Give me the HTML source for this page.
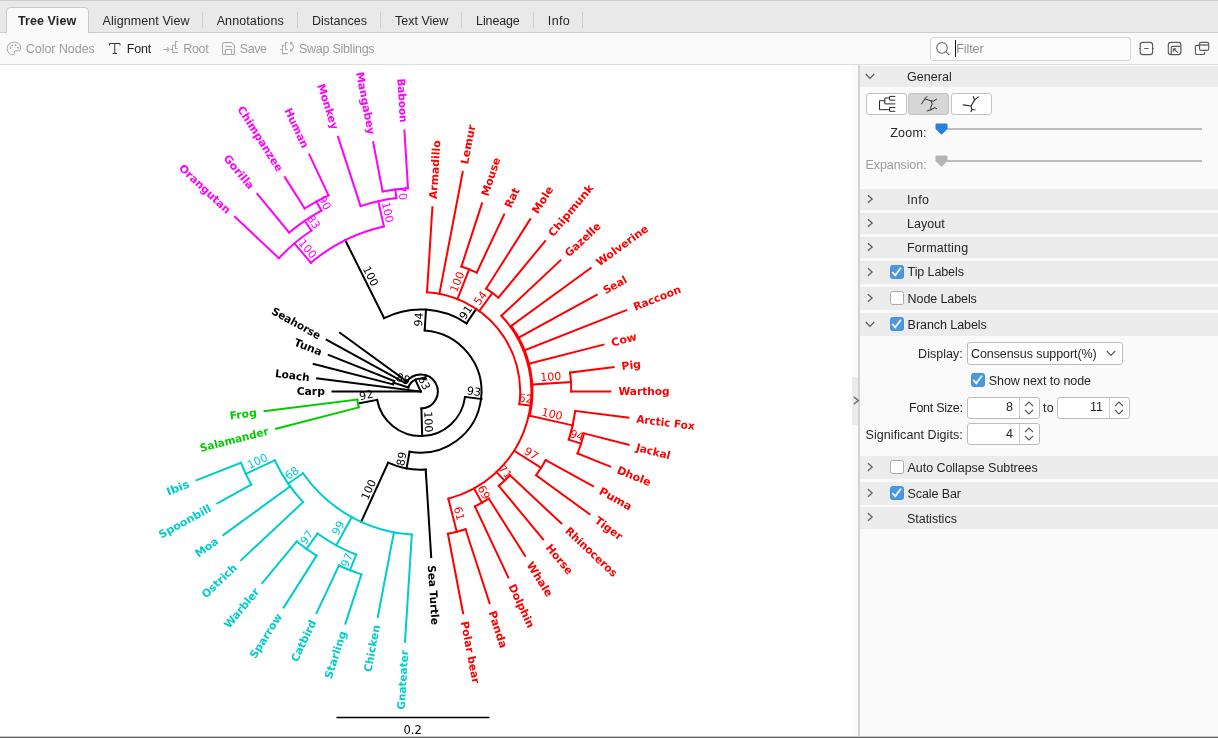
<!DOCTYPE html>
<html><head><meta charset="utf-8"><title>Tree View</title>
<style>
*{box-sizing:border-box;margin:0;padding:0}
html,body{width:1218px;height:738px;overflow:hidden;background:#fafafa}
body{position:relative;font-family:"Liberation Sans",sans-serif;font-size:12.5px;color:#232627}
.abs{position:absolute}
.t{position:absolute;white-space:nowrap;line-height:15px;height:15px}
.g{color:#9a9b9c}
#tabbar{left:0;top:0;width:1218px;height:33px;background:#e9e9e9;border-top:1px solid #cfcfcf;border-bottom:1px solid #cdcdcd}
#atab{left:6px;top:7px;width:83px;height:27px;background:#fafafa;border:1px solid #c9c9c9;border-bottom:none;border-radius:5px 5px 0 0}
.sep{position:absolute;top:12px;width:1px;height:16px;background:#cfcfcf}
#toolbar{left:0;top:33px;width:1218px;height:32px;background:#fafafa;border-bottom:1px solid #dedede}
#canvas{left:0;top:65px;width:852px;height:671px;background:#fff}
#split{left:852px;top:65px;width:6px;height:671px;background:#fafafa}
#splith{left:852px;top:377px;width:6px;height:48px;background:#ebebeb}
#vline{left:858px;top:65px;width:2px;height:671px;background:#d3d3d3}
#panel{left:860px;top:65px;width:358px;height:671px;background:#fafafa}
.row{position:absolute;left:860px;width:358px;background:#ececec}
.cb{position:absolute;width:13.6px;height:13.6px;border-radius:2.5px}
.cb.on{background:#4a98e2;border:1px solid #4590dc}
.cb.off{background:#fff;border:1px solid #a9a9a9}
.box{position:absolute;background:#fff;border:1px solid #bcbcbc;border-radius:3px}
#bottom1{left:0;top:736px;width:1218px;height:1px;background:#c8c8c8}
#bottom2{left:0;top:737px;width:1218px;height:1px;background:#5e5e5e}
svg.ic{position:absolute;overflow:visible}
.tip{font-weight:bold;font-size:10.8px}
#root{position:absolute;left:0;top:0;width:1218px;height:738px;will-change:transform;transform:translateZ(0)}
</style></head>
<body>
<div id="root">
<div class="abs" id="tabbar"></div><div class="abs" id="atab"></div>
<div class="t " style="left:17.9px;top:14.10px;font-weight:bold;letter-spacing:0.105px;">Tree View</div>
<div class="t " style="left:102.6px;top:14.10px;letter-spacing:0.076px;">Alignment View</div>
<div class="t " style="left:216.7px;top:14.10px;letter-spacing:0.097px;">Annotations</div>
<div class="t " style="left:311.9px;top:14.10px;letter-spacing:0.023px;">Distances</div>
<div class="t " style="left:395.0px;top:14.10px;letter-spacing:0.004px;">Text View</div>
<div class="t " style="left:476.1px;top:14.10px;letter-spacing:-0.129px;">Lineage</div>
<div class="t " style="left:547.8px;top:14.10px;letter-spacing:0.360px;">Info</div>
<div class="sep" style="left:202px"></div>
<div class="sep" style="left:297px"></div>
<div class="sep" style="left:380px"></div>
<div class="sep" style="left:461px"></div>
<div class="sep" style="left:533px"></div>
<div class="sep" style="left:582px"></div>
<div class="abs" id="toolbar"></div>
<div class="t g" style="left:25.8px;top:42.10px;letter-spacing:-0.044px;">Color Nodes</div>
<div class="t " style="left:126.8px;top:42.10px;letter-spacing:-0.179px;">Font</div>
<div class="t g" style="left:183.2px;top:42.10px;letter-spacing:-0.327px;">Root</div>
<div class="t g" style="left:239.8px;top:42.10px;letter-spacing:-0.475px;">Save</div>
<div class="t g" style="left:298.9px;top:42.10px;letter-spacing:-0.232px;">Swap Siblings</div>
<svg class="ic" style="left:6px;top:41px" width="16" height="16" viewBox="0 0 16 16"><path d="M8 1.2C4.2 1.2 1.2 4 1.2 7.6c0 3.4 2.6 6.2 5.6 6.2 1.3 0 1.9-.8 1.6-1.8-.4-1.3.3-2.2 1.7-2.2h2c1.6 0 2.6-1 2.6-2.6C14.700 3.8 11.800 1.2 8 1.200z" fill="none" stroke="#a3a3a3" stroke-width="1"/><circle cx="4.500" cy="7" r=".9" fill="#a3a3a3"/><circle cx="6.300" cy="4.300" r=".9" fill="#a3a3a3"/><circle cx="9.600" cy="4.200" r=".9" fill="#a3a3a3"/><circle cx="11.800" cy="6.600" r=".9" fill="#a3a3a3"/></svg>
<svg class="ic" style="left:109px;top:43px" width="12" height="11" viewBox="0 0 12 11"><path d="M0.500 2.500V0.500H11V2.500M5.750 0.500V10.500M3.500 10.500H8" fill="none" stroke="#3a3a3a" stroke-width="1"/></svg>
<svg class="ic" style="left:0;top:33px" width="1218" height="32" viewBox="0 33 1218 32"><g fill="none" stroke="#a8a8a8" stroke-width="1.05" stroke-linejoin="round"><path d="M163 49.5H168.7M167.2 47.4L168.9 49.5L167.2 51.6M170.2 49.5H172.6M175.5 45.3H172.6V52.5H177.9M177.9 41.4H175.5V48.4H177.9"/><path d="M224 42.5H231.4L234.4 45.5V52.9a1.500 1.500 0 0 1-1.500 1.500H224a1.500 1.500 0 0 1-1.500-1.500V44a1.500 1.500 0 0 1 1.500-1.500zM225.300 46.500H231.900M225.500 54.400V49.400H231.700V54.400"/><path d="M280.100 49.500H282.500M285.300 45.300H282.500V53.600H287.800M287.800 42.300H285.500V49.500H287.800M291.300 43.300Q295.600 46.800 291.300 50.300"/><path d="M290 42L293 42.300L290.300 45zM290 51.600L293 51.300L290.300 48.600z" fill="#a8a8a8" stroke="none"/></g><g fill="none" stroke="#5b5b5b" stroke-width="1.150" stroke-linejoin="round"><rect x="1140.200" y="42.300" width="12.400" height="12.300" rx="2.600"/><path d="M1139.100 48.450H1140.200M1152.600 48.450H1153.700M1144.200 48.450H1148.600"/><rect x="1168.300" y="42.300" width="12.600" height="12.300" rx="2.600"/><path d="M1171.200 54.600V47.800a1.500 1.500 0 0 1 1.500-1.500H1180.900M1177.800 52.600L1173.400 48.900M1173.300 51.600V48.800H1176.100"/><rect x="1199.500" y="42.300" width="9.200" height="8" rx="1.600"/><path d="M1199.500 45H1208.700" stroke-width="1.300"/><path d="M1199.500 45.400H1197a1.600 1.600 0 0 0-1.600 1.600V52.900a1.600 1.600 0 0 0 1.600 1.600H1203.100a1.600 1.600 0 0 0 1.600-1.600V51.800"/></g></svg>
<div class="box" style="left:930px;top:37px;width:200.5px;height:24px;border-color:#d4d4d4;background:#fcfcfc"></div>
<svg class="ic" style="left:934px;top:40px" width="18" height="18" viewBox="934 40 18 18"><circle cx="942" cy="47.9" r="5.3" fill="none" stroke="#707070" stroke-width="1.15"/><path d="M945.8 51.700L949.300 55.100" stroke="#707070" stroke-width="1.150"/></svg>
<div class="abs" style="left:954.9px;top:40.2px;width:1.3px;height:16.600px;background:#111"></div>
<div class="t " style="left:956.3px;top:42.10px;color:#8e8e8e;letter-spacing:-0.097px;">Filter</div>
<div class="abs" id="canvas"></div>
<svg width="852" height="671" viewBox="0 65 852 671" style="position:absolute;left:0;top:65px">
<g fill="none" stroke-width="2" stroke-linecap="square">
<path d="M421.4 408.5L422.2 436.0" stroke="#000000"/>
<path d="M465.0 397.0A44.5 44.5 0 0 1 377.1 399.8" stroke="#000000"/>
<path d="M465.0 397.0L481.5 399.0" stroke="#000000"/>
<path d="M424.7 330.4A61.2 61.2 0 1 1 409.6 451.7" stroke="#000000"/>
<path d="M424.7 330.4L426.0 309.7" stroke="#000000"/>
<path d="M384.1 318.1A82.0 82.0 0 0 1 466.5 323.4" stroke="#000000"/>
<path d="M384.1 318.1L345.2 240.1" stroke="#000000"/>
<path d="M310.9 262.8A169.2 169.2 0 0 1 383.9 226.4" stroke="#ff00ff"/>
<path d="M310.9 262.8L294.4 243.4" stroke="#ff00ff"/>
<path d="M278.9 258.2A194.7 194.7 0 0 1 311.4 230.5" stroke="#ff00ff"/>
<path d="M278.9 258.2L235.0 217.0" stroke="#ff00ff"/>
<path d="M311.4 230.5L304.8 220.8" stroke="#ff00ff"/>
<path d="M289.2 232.5A206.4 206.4 0 0 1 321.4 210.6" stroke="#ff00ff"/>
<path d="M289.2 232.5L257.3 193.9" stroke="#ff00ff"/>
<path d="M321.4 210.6L316.4 201.6" stroke="#ff00ff"/>
<path d="M304.7 208.5A216.7 216.7 0 0 1 328.5 195.4" stroke="#ff00ff"/>
<path d="M304.7 208.5L284.8 177.2" stroke="#ff00ff"/>
<path d="M328.5 195.4L309.3 154.6" stroke="#ff00ff"/>
<path d="M383.9 226.4L378.3 201.3" stroke="#ff00ff"/>
<path d="M360.6 206.1A194.9 194.9 0 0 1 396.4 198.1" stroke="#ff00ff"/>
<path d="M360.6 206.1L338.0 136.8" stroke="#ff00ff"/>
<path d="M396.4 198.1L395.3 189.4" stroke="#ff00ff"/>
<path d="M382.6 191.4A203.7 203.7 0 0 1 408.0 188.2" stroke="#ff00ff"/>
<path d="M382.6 191.4L373.2 142.2" stroke="#ff00ff"/>
<path d="M408.0 188.2L404.4 130.5" stroke="#ff00ff"/>
<path d="M466.5 323.4L476.2 309.0" stroke="#000000"/>
<path d="M427.0 292.3A99.4 99.4 0 0 1 519.4 404.2" stroke="#ff0000"/>
<path d="M427.0 292.3L432.4 207.2" stroke="#ff0000"/>
<path d="M439.4 293.9L462.7 172.0" stroke="#ff0000"/>
<path d="M457.4 299.1L469.2 269.3" stroke="#ff0000"/>
<path d="M461.4 266.5A131.4 131.4 0 0 1 476.7 272.6" stroke="#ff0000"/>
<path d="M461.4 266.5L482.0 203.3" stroke="#ff0000"/>
<path d="M476.7 272.6L504.1 214.5" stroke="#ff0000"/>
<path d="M479.2 311.1L492.4 293.0" stroke="#ff0000"/>
<path d="M486.1 288.7A121.8 121.8 0 0 1 498.4 297.7" stroke="#ff0000"/>
<path d="M486.1 288.7L530.2 219.2" stroke="#ff0000"/>
<path d="M498.4 297.7L545.1 241.2" stroke="#ff0000"/>
<path d="M519.4 404.2L530.5 405.7" stroke="#ff0000"/>
<path d="M501.4 315.8A110.6 110.6 0 0 1 448.3 498.6" stroke="#ff0000"/>
<path d="M501.4 315.8L560.5 260.3" stroke="#ff0000"/>
<path d="M510.3 326.5L590.7 268.1" stroke="#ff0000"/>
<path d="M517.7 338.2L596.7 294.8" stroke="#ff0000"/>
<path d="M523.6 350.8L626.2 310.2" stroke="#ff0000"/>
<path d="M527.9 364.0L603.5 344.6" stroke="#ff0000"/>
<path d="M531.2 384.6L571.0 382.1" stroke="#ff0000"/>
<path d="M570.1 372.6A150.5 150.5 0 0 1 571.3 391.5" stroke="#ff0000"/>
<path d="M570.1 372.6L613.6 367.1" stroke="#ff0000"/>
<path d="M571.3 391.5L610.4 391.5" stroke="#ff0000"/>
<path d="M528.7 415.6L572.7 425.4" stroke="#ff0000"/>
<path d="M575.2 411.0A155.6 155.6 0 0 1 568.8 439.6" stroke="#ff0000"/>
<path d="M575.2 411.0L628.4 417.7" stroke="#ff0000"/>
<path d="M568.8 439.6L581.1 443.6" stroke="#ff0000"/>
<path d="M584.0 433.4A168.5 168.5 0 0 1 577.5 453.5" stroke="#ff0000"/>
<path d="M584.0 433.4L628.6 444.8" stroke="#ff0000"/>
<path d="M577.5 453.5L610.1 466.5" stroke="#ff0000"/>
<path d="M514.2 450.8L541.1 467.9" stroke="#ff0000"/>
<path d="M545.7 460.1A142.5 142.5 0 0 1 536.1 475.3" stroke="#ff0000"/>
<path d="M545.7 460.1L593.0 486.2" stroke="#ff0000"/>
<path d="M536.1 475.3L589.6 514.2" stroke="#ff0000"/>
<path d="M496.5 472.1L504.6 480.7" stroke="#ff0000"/>
<path d="M510.0 475.3A122.4 122.4 0 0 1 498.8 485.8" stroke="#ff0000"/>
<path d="M510.0 475.3L561.3 523.4" stroke="#ff0000"/>
<path d="M498.8 485.8L543.1 539.4" stroke="#ff0000"/>
<path d="M474.1 488.4L482.0 502.8" stroke="#ff0000"/>
<path d="M488.9 498.7A127.0 127.0 0 0 1 474.9 506.4" stroke="#ff0000"/>
<path d="M488.9 498.7L525.1 555.9" stroke="#ff0000"/>
<path d="M474.9 506.4L508.3 577.4" stroke="#ff0000"/>
<path d="M448.3 498.6L456.8 531.8" stroke="#ff0000"/>
<path d="M465.5 529.2A144.8 144.8 0 0 1 447.9 533.7" stroke="#ff0000"/>
<path d="M465.5 529.2L489.6 603.3" stroke="#ff0000"/>
<path d="M447.9 533.7L463.1 613.3" stroke="#ff0000"/>
<path d="M409.6 451.7L406.5 468.5" stroke="#000000"/>
<path d="M425.7 469.6A78.3 78.3 0 0 1 388.2 462.7" stroke="#000000"/>
<path d="M425.7 469.6L431.2 557.1" stroke="#000000"/>
<path d="M388.2 462.7L361.1 521.9" stroke="#000000"/>
<path d="M411.8 534.6A143.4 143.4 0 0 1 303.0 473.3" stroke="#00cccc"/>
<path d="M411.8 534.6L405.0 642.0" stroke="#00cccc"/>
<path d="M393.9 532.4L377.8 617.0" stroke="#00cccc"/>
<path d="M351.7 517.2L336.3 545.3" stroke="#00cccc"/>
<path d="M356.2 554.7A175.5 175.5 0 0 1 317.6 533.5" stroke="#00cccc"/>
<path d="M356.2 554.7L350.0 570.3" stroke="#00cccc"/>
<path d="M361.4 574.4A192.3 192.3 0 0 1 338.9 565.5" stroke="#00cccc"/>
<path d="M361.4 574.4L345.4 623.7" stroke="#00cccc"/>
<path d="M338.9 565.5L316.5 613.2" stroke="#00cccc"/>
<path d="M317.6 533.5L306.5 548.9" stroke="#00cccc"/>
<path d="M316.6 555.7A194.5 194.5 0 0 1 296.8 541.4" stroke="#00cccc"/>
<path d="M316.6 555.7L283.7 607.5" stroke="#00cccc"/>
<path d="M296.8 541.4L262.2 583.2" stroke="#00cccc"/>
<path d="M303.0 473.3L288.2 483.7" stroke="#00cccc"/>
<path d="M303.1 502.1A161.5 161.5 0 0 1 274.7 460.3" stroke="#00cccc"/>
<path d="M303.1 502.1L241.1 560.2" stroke="#00cccc"/>
<path d="M290.1 486.4L223.3 535.0" stroke="#00cccc"/>
<path d="M274.7 460.3L245.7 473.9" stroke="#00cccc"/>
<path d="M251.2 484.7A193.5 193.5 0 0 1 240.9 462.7" stroke="#00cccc"/>
<path d="M251.2 484.7L217.3 503.4" stroke="#00cccc"/>
<path d="M240.9 462.7L196.4 480.3" stroke="#00cccc"/>
<path d="M377.1 399.8L357.9 403.5" stroke="#000000"/>
<path d="M358.8 407.4A64.0 64.0 0 0 1 357.3 399.5" stroke="#00cc00"/>
<path d="M358.8 407.4L276.1 428.7" stroke="#00cc00"/>
<path d="M357.3 399.5L264.6 411.2" stroke="#00cc00"/>
<path d="M511.2 325.8A111.7 111.7 0 0 1 529.8 415.9" stroke="#ff0000"/>
<path d="M420.8 391.5L332.5 391.5" stroke="#000000"/>
<path d="M420.8 391.5L317.1 378.4" stroke="#000000"/>
<path d="M393.1 384.4L313.7 364.0" stroke="#000000"/>
<path d="M394.2 381.0L328.7 355.0" stroke="#000000"/>
<path d="M393.1 384.4A28.6 28.6 0 0 1 394.2 381.0" stroke="#000000"/>
<path d="M408.4 387.5L393.6 382.7" stroke="#000000"/>
<path d="M405.0 382.8L326.7 339.8" stroke="#000000"/>
<path d="M406.2 380.9L340.0 332.8" stroke="#000000"/>
<path d="M405.0 382.8A18.0 18.0 0 0 1 406.2 380.9" stroke="#000000"/>
<path d="M408.4 387.5A13.0 13.0 0 0 1 424.8 379.1" stroke="#000000"/>
<path d="M420.8 391.5L415.3 379.7" stroke="#000000"/>
<path d="M406.4 382.5A17.0 17.0 0 1 1 421.4 408.5" stroke="#000000"/>
<path d="M424.8 379.1L426.1 375.3" stroke="#000000"/>
</g>
<g font-family="'DejaVu Sans', sans-serif" font-size="11">
<text transform="translate(421.8 422.2) rotate(88.1)" y="-2.9" text-anchor="middle" font-size="11.0" fill="#000000">100</text>
<text transform="translate(473.2 398.0) rotate(7.1)" y="-2.9" text-anchor="middle" font-size="11.0" fill="#000000">93</text>
<text transform="translate(425.4 320.0) rotate(273.7)" y="-2.9" text-anchor="middle" font-size="11.0" fill="#000000">94</text>
<text transform="translate(364.7 279.1) rotate(63.4)" y="-2.9" text-anchor="middle" font-size="11.0" fill="#000000">100</text>
<text transform="translate(302.6 253.1) rotate(49.5)" y="-2.9" text-anchor="middle" font-size="11.0" fill="#ff00ff">100</text>
<text class="tip" transform="translate(229.1 211.5) rotate(43.2)" y="3.9" text-anchor="end" fill="#ff00ff" textLength="66.1" lengthAdjust="spacingAndGlyphs">Orangutan</text>
<text transform="translate(308.1 225.6) rotate(55.8)" y="-2.9" text-anchor="middle" font-size="11.0" fill="#ff00ff">83</text>
<text class="tip" transform="translate(252.1 187.6) rotate(50.4)" y="3.9" text-anchor="end" fill="#ff00ff" textLength="40.9" lengthAdjust="spacingAndGlyphs">Gorilla</text>
<text transform="translate(318.9 206.1) rotate(61.2)" y="-2.9" text-anchor="middle" font-size="11.0" fill="#ff00ff">90</text>
<text class="tip" transform="translate(280.5 170.4) rotate(57.6)" y="3.9" text-anchor="end" fill="#ff00ff" textLength="75.1" lengthAdjust="spacingAndGlyphs">Chimpanzee</text>
<text class="tip" transform="translate(305.9 147.3) rotate(64.8)" y="3.9" text-anchor="end" fill="#ff00ff" textLength="42.8" lengthAdjust="spacingAndGlyphs">Human</text>
<text transform="translate(381.1 213.8) rotate(77.4)" y="-2.9" text-anchor="middle" font-size="11.0" fill="#ff00ff">100</text>
<text class="tip" transform="translate(335.5 129.1) rotate(72.0)" y="3.9" text-anchor="end" fill="#ff00ff" textLength="47.5" lengthAdjust="spacingAndGlyphs">Monkey</text>
<text transform="translate(395.8 193.8) rotate(82.8)" y="-2.9" text-anchor="middle" font-size="11.0" fill="#ff00ff">70</text>
<text class="tip" transform="translate(371.7 134.2) rotate(79.2)" y="3.9" text-anchor="end" fill="#ff00ff" textLength="63.4" lengthAdjust="spacingAndGlyphs">Mangabey</text>
<text class="tip" transform="translate(403.9 122.4) rotate(86.4)" y="3.9" text-anchor="end" fill="#ff00ff" textLength="44.1" lengthAdjust="spacingAndGlyphs">Baboon</text>
<text transform="translate(471.4 316.2) rotate(303.9)" y="-2.9" text-anchor="middle" font-size="11.0" fill="#000000">91</text>
<text class="tip" transform="translate(432.9 199.1) rotate(273.6)" y="3.9" fill="#ff0000" textLength="58.9" lengthAdjust="spacingAndGlyphs">Armadillo</text>
<text class="tip" transform="translate(464.2 164.0) rotate(280.8)" y="3.9" fill="#ff0000" textLength="39.9" lengthAdjust="spacingAndGlyphs">Lemur</text>
<text transform="translate(463.3 284.2) rotate(291.6)" y="-2.9" text-anchor="middle" font-size="11.0" fill="#ff0000">100</text>
<text class="tip" transform="translate(484.5 195.6) rotate(288.0)" y="3.9" fill="#ff0000" textLength="39.9" lengthAdjust="spacingAndGlyphs">Mouse</text>
<text class="tip" transform="translate(507.5 207.2) rotate(295.2)" y="3.9" fill="#ff0000" textLength="20.9" lengthAdjust="spacingAndGlyphs">Rat</text>
<text transform="translate(485.8 302.0) rotate(306.0)" y="-2.9" text-anchor="middle" font-size="11.0" fill="#ff0000">54</text>
<text class="tip" transform="translate(534.5 212.3) rotate(302.4)" y="3.9" fill="#ff0000" textLength="29.8" lengthAdjust="spacingAndGlyphs">Mole</text>
<text class="tip" transform="translate(550.3 235.0) rotate(309.6)" y="3.9" fill="#ff0000" textLength="64.1" lengthAdjust="spacingAndGlyphs">Chipmunk</text>
<text transform="translate(524.9 405.0) rotate(7.4)" y="-2.9" text-anchor="middle" font-size="11.0" fill="#ff0000">62</text>
<text class="tip" transform="translate(566.4 254.7) rotate(316.8)" y="3.9" fill="#ff0000" textLength="44.5" lengthAdjust="spacingAndGlyphs">Gazelle</text>
<text class="tip" transform="translate(597.2 263.3) rotate(324.0)" y="3.9" fill="#ff0000" textLength="61.4" lengthAdjust="spacingAndGlyphs">Wolverine</text>
<text class="tip" transform="translate(603.8 290.9) rotate(331.2)" y="3.9" fill="#ff0000" textLength="25.4" lengthAdjust="spacingAndGlyphs">Seal</text>
<text class="tip" transform="translate(633.7 307.2) rotate(338.4)" y="3.9" fill="#ff0000" textLength="50.3" lengthAdjust="spacingAndGlyphs">Raccoon</text>
<text class="tip" transform="translate(611.3 342.6) rotate(345.6)" y="3.9" fill="#ff0000" textLength="26.1" lengthAdjust="spacingAndGlyphs">Cow</text>
<text transform="translate(551.1 383.3) rotate(356.4)" y="-2.9" text-anchor="middle" font-size="11.0" fill="#ff0000">100</text>
<text class="tip" transform="translate(621.6 366.1) rotate(352.8)" y="3.9" fill="#ff0000">Pig</text>
<text class="tip" transform="translate(618.5 391.5) rotate(0.0)" y="3.9" fill="#ff0000" textLength="51.1" lengthAdjust="spacingAndGlyphs">Warthog</text>
<text transform="translate(550.7 420.5) rotate(12.6)" y="-2.9" text-anchor="middle" font-size="11.0" fill="#ff0000">100</text>
<text class="tip" transform="translate(636.4 418.7) rotate(7.2)" y="3.9" fill="#ff0000" textLength="58.7" lengthAdjust="spacingAndGlyphs">Arctic Fox</text>
<text transform="translate(574.9 441.6) rotate(18.0)" y="-2.9" text-anchor="middle" font-size="11.0" fill="#ff0000">94</text>
<text class="tip" transform="translate(636.4 446.9) rotate(14.4)" y="3.9" fill="#ff0000" textLength="34.9" lengthAdjust="spacingAndGlyphs">Jackal</text>
<text class="tip" transform="translate(617.6 469.4) rotate(21.6)" y="3.9" fill="#ff0000" textLength="35.6" lengthAdjust="spacingAndGlyphs">Dhole</text>
<text transform="translate(527.6 459.3) rotate(32.4)" y="-2.9" text-anchor="middle" font-size="11.0" fill="#ff0000">97</text>
<text class="tip" transform="translate(600.1 490.1) rotate(28.8)" y="3.9" fill="#ff0000" textLength="35.6" lengthAdjust="spacingAndGlyphs">Puma</text>
<text class="tip" transform="translate(596.2 518.9) rotate(36.0)" y="3.9" fill="#ff0000">Tiger</text>
<text transform="translate(500.5 476.4) rotate(46.8)" y="-2.9" text-anchor="middle" font-size="11.0" fill="#ff0000">71</text>
<text class="tip" transform="translate(567.2 529.0) rotate(43.2)" y="3.9" fill="#ff0000" textLength="66.7" lengthAdjust="spacingAndGlyphs">Rhinoceros</text>
<text class="tip" transform="translate(548.3 545.6) rotate(50.4)" y="3.9" fill="#ff0000">Horse</text>
<text transform="translate(478.0 495.6) rotate(61.2)" y="-2.9" text-anchor="middle" font-size="11.0" fill="#ff0000">69</text>
<text class="tip" transform="translate(529.5 562.7) rotate(57.6)" y="3.9" fill="#ff0000" textLength="39" lengthAdjust="spacingAndGlyphs">Whale</text>
<text class="tip" transform="translate(511.7 584.7) rotate(64.8)" y="3.9" fill="#ff0000">Dolphin</text>
<text transform="translate(452.6 515.2) rotate(75.6)" y="-2.9" text-anchor="middle" font-size="11.0" fill="#ff0000">61</text>
<text class="tip" transform="translate(492.1 611.0) rotate(72.0)" y="3.9" fill="#ff0000" textLength="38.6" lengthAdjust="spacingAndGlyphs">Panda</text>
<text class="tip" transform="translate(464.6 621.3) rotate(79.2)" y="3.9" fill="#ff0000">Polar bear</text>
<text transform="translate(408.1 460.1) rotate(280.5)" y="-2.9" text-anchor="middle" font-size="11.0" fill="#000000">89</text>
<text class="tip" transform="translate(431.7 565.2) rotate(86.4)" y="3.9" fill="#000000" textLength="59.7" lengthAdjust="spacingAndGlyphs">Sea Turtle</text>
<text transform="translate(374.7 492.3) rotate(294.6)" y="-2.9" text-anchor="middle" font-size="11.0" fill="#000000">100</text>
<text class="tip" transform="translate(404.5 650.1) rotate(273.6)" y="3.9" text-anchor="end" fill="#00cccc" textLength="59.6" lengthAdjust="spacingAndGlyphs">Gnateater</text>
<text class="tip" transform="translate(376.3 625.0) rotate(280.8)" y="3.9" text-anchor="end" fill="#00cccc">Chicken</text>
<text transform="translate(344.0 531.2) rotate(298.8)" y="-2.9" text-anchor="middle" font-size="11.0" fill="#00cccc">99</text>
<text transform="translate(353.1 562.5) rotate(291.6)" y="-2.9" text-anchor="middle" font-size="11.0" fill="#00cccc">97</text>
<text class="tip" transform="translate(342.9 631.4) rotate(288.0)" y="3.9" text-anchor="end" fill="#00cccc" textLength="49.3" lengthAdjust="spacingAndGlyphs">Starling</text>
<text class="tip" transform="translate(313.0 620.5) rotate(295.2)" y="3.9" text-anchor="end" fill="#00cccc">Catbird</text>
<text transform="translate(312.1 541.2) rotate(306.0)" y="-2.9" text-anchor="middle" font-size="11.0" fill="#00cccc">97</text>
<text class="tip" transform="translate(279.4 614.3) rotate(302.4)" y="3.9" text-anchor="end" fill="#00cccc">Sparrow</text>
<text class="tip" transform="translate(257.0 589.4) rotate(309.6)" y="3.9" text-anchor="end" fill="#00cccc">Warbler</text>
<text transform="translate(295.6 478.5) rotate(325.2)" y="-2.9" text-anchor="middle" font-size="11.0" fill="#00cccc">68</text>
<text class="tip" transform="translate(235.2 565.8) rotate(316.8)" y="3.9" text-anchor="end" fill="#00cccc">Ostrich</text>
<text class="tip" transform="translate(216.8 539.7) rotate(324.0)" y="3.9" text-anchor="end" fill="#00cccc">Moa</text>
<text transform="translate(260.2 467.1) rotate(334.8)" y="-2.9" text-anchor="middle" font-size="11.0" fill="#00cccc">100</text>
<text class="tip" transform="translate(210.2 507.3) rotate(331.2)" y="3.9" text-anchor="end" fill="#00cccc" textLength="58" lengthAdjust="spacingAndGlyphs">Spoonbill</text>
<text class="tip" transform="translate(188.9 483.3) rotate(338.4)" y="3.9" text-anchor="end" fill="#00cccc" textLength="23.9" lengthAdjust="spacingAndGlyphs">Ibis</text>
<text transform="translate(367.5 401.7) rotate(349.2)" y="-2.9" text-anchor="middle" font-size="11.0" fill="#000000">92</text>
<text class="tip" transform="translate(268.2 430.7) rotate(345.6)" y="3.9" text-anchor="end" fill="#00cc00" textLength="70.4" lengthAdjust="spacingAndGlyphs">Salamander</text>
<text class="tip" transform="translate(256.6 412.2) rotate(352.8)" y="3.9" text-anchor="end" fill="#00cc00">Frog</text>
<text class="tip" transform="translate(324.9 391.5) rotate(0.0)" y="3.9" text-anchor="end" fill="#000000">Carp</text>
<text class="tip" transform="translate(309.6 377.5) rotate(7.2)" y="3.9" text-anchor="end" fill="#000000" textLength="34.7" lengthAdjust="spacingAndGlyphs">Loach</text>
<text class="tip" transform="translate(321.6 352.2) rotate(21.6)" y="3.9" text-anchor="end" fill="#000000">Tuna</text>
<text class="tip" transform="translate(320.0 336.1) rotate(28.8)" y="3.9" text-anchor="end" fill="#000000" textLength="54.1" lengthAdjust="spacingAndGlyphs">Seahorse</text>
<text transform="translate(418.2 385.8) rotate(65.0)" y="-2.9" text-anchor="middle" font-size="11.0" fill="#000000">63</text>
<text transform="translate(401.0 385.1) rotate(18.0)" y="-2.9" text-anchor="middle" font-size="11.0" fill="#000000">88</text>
</g>
<path d="M336.5 717.5H489.5" stroke="#000" stroke-width="1.3" fill="none"/>
<text x="412.6" y="733.7" text-anchor="middle" font-family="'DejaVu Sans', sans-serif" font-size="11.5" fill="#000">0.2</text>
</svg>

<div class="abs" id="split"></div><div class="abs" id="splith"></div><div class="abs" id="vline"></div><div class="abs" id="panel"></div>
<svg class="ic" style="left:852.500px;top:396px" width="7" height="9" viewBox="0 0 7 9"><path d="M0.800 0.800L5.300 4.500L0.800 8.200" fill="none" stroke="#6f6f6f" stroke-width="1.500"/></svg>
<div class="row" style="top:66px;height:21px"></div>
<svg class="ic" style="left:864.6px;top:72.5px" width="10" height="7" viewBox="0 0 10 7"><path d="M0.8 1L5 5.4L9.2 1" fill="none" stroke="#5a5a5a" stroke-width="1.2"/></svg>
<div class="t " style="left:906.9px;top:69.70px;letter-spacing:0.074px;">General</div>
<div class="row" style="top:189px;height:21px"></div>
<svg class="ic" style="left:866.6px;top:193.5px" width="7" height="10" viewBox="0 0 7 10"><path d="M0.9 1.2L5.2 5L0.9 8.8" fill="none" stroke="#5a5a5a" stroke-width="1.2"/></svg>
<div class="t " style="left:906.9px;top:192.60px;letter-spacing:0.435px;">Info</div>
<div class="row" style="top:213px;height:21px"></div>
<svg class="ic" style="left:866.6px;top:217.5px" width="7" height="10" viewBox="0 0 7 10"><path d="M0.9 1.2L5.2 5L0.9 8.8" fill="none" stroke="#5a5a5a" stroke-width="1.2"/></svg>
<div class="t " style="left:906.9px;top:216.60px;letter-spacing:0.045px;">Layout</div>
<div class="row" style="top:237px;height:21px"></div>
<svg class="ic" style="left:866.6px;top:241.5px" width="7" height="10" viewBox="0 0 7 10"><path d="M0.9 1.2L5.2 5L0.9 8.8" fill="none" stroke="#5a5a5a" stroke-width="1.2"/></svg>
<div class="t " style="left:906.9px;top:240.60px;letter-spacing:0.165px;">Formatting</div>
<div class="row" style="top:261px;height:23px"></div>
<svg class="ic" style="left:866.6px;top:266.5px" width="7" height="10" viewBox="0 0 7 10"><path d="M0.9 1.2L5.2 5L0.9 8.8" fill="none" stroke="#5a5a5a" stroke-width="1.2"/></svg>
<div class="cb on" style="left:890.3px;top:265.3px"><svg width="12" height="12" viewBox="0 0 12 12" style="position:absolute;left:0;top:0"><path d="M1.300 6L4.200 9.300L9.900 1.700" fill="none" stroke="#fff" stroke-width="1.800"/></svg></div>
<div class="t " style="left:907.6px;top:265.30px;letter-spacing:-0.102px;">Tip Labels</div>
<div class="row" style="top:287px;height:23px"></div>
<svg class="ic" style="left:866.6px;top:292.5px" width="7" height="10" viewBox="0 0 7 10"><path d="M0.9 1.2L5.2 5L0.9 8.8" fill="none" stroke="#5a5a5a" stroke-width="1.2"/></svg>
<div class="cb off" style="left:890.3px;top:291.3px"></div>
<div class="t " style="left:907.6px;top:291.70px;letter-spacing:-0.091px;">Node Labels</div>
<div class="row" style="top:313px;height:23px"></div>
<svg class="ic" style="left:864.6px;top:320.5px" width="10" height="7" viewBox="0 0 10 7"><path d="M0.8 1L5 5.4L9.2 1" fill="none" stroke="#5a5a5a" stroke-width="1.2"/></svg>
<div class="cb on" style="left:890.3px;top:317.3px"><svg width="12" height="12" viewBox="0 0 12 12" style="position:absolute;left:0;top:0"><path d="M1.300 6L4.200 9.300L9.900 1.700" fill="none" stroke="#fff" stroke-width="1.800"/></svg></div>
<div class="t " style="left:907.6px;top:317.70px;letter-spacing:-0.056px;">Branch Labels</div>
<div class="row" style="top:456px;height:23px"></div>
<svg class="ic" style="left:866.6px;top:461.5px" width="7" height="10" viewBox="0 0 7 10"><path d="M0.9 1.2L5.2 5L0.9 8.8" fill="none" stroke="#5a5a5a" stroke-width="1.2"/></svg>
<div class="cb off" style="left:890.3px;top:460.3px"></div>
<div class="t " style="left:907.6px;top:461.00px;letter-spacing:-0.057px;">Auto Collapse Subtrees</div>
<div class="row" style="top:482px;height:23px"></div>
<svg class="ic" style="left:866.6px;top:487.5px" width="7" height="10" viewBox="0 0 7 10"><path d="M0.9 1.2L5.2 5L0.9 8.8" fill="none" stroke="#5a5a5a" stroke-width="1.2"/></svg>
<div class="cb on" style="left:890.3px;top:486.3px"><svg width="12" height="12" viewBox="0 0 12 12" style="position:absolute;left:0;top:0"><path d="M1.300 6L4.200 9.300L9.900 1.700" fill="none" stroke="#fff" stroke-width="1.800"/></svg></div>
<div class="t " style="left:907.6px;top:486.70px;letter-spacing:-0.111px;">Scale Bar</div>
<div class="row" style="top:507px;height:22px"></div>
<svg class="ic" style="left:866.6px;top:512.0px" width="7" height="10" viewBox="0 0 7 10"><path d="M0.9 1.2L5.2 5L0.9 8.8" fill="none" stroke="#5a5a5a" stroke-width="1.2"/></svg>
<div class="t " style="left:906.9px;top:512.10px;letter-spacing:-0.002px;">Statistics</div>
<div class="box" style="left:866.3px;top:93.3px;width:41px;height:21.4px;background:#fff;border-color:#c2c2c2"></div>
<div class="box" style="left:908.3px;top:93.3px;width:41.2px;height:21.4px;background:#d6d6d6;border-color:#c2c2c2"></div>
<div class="box" style="left:950.6px;top:93.3px;width:41px;height:21.4px;background:#fff;border-color:#c2c2c2"></div>
<svg class="ic" style="left:864px;top:90px" width="130" height="28" viewBox="0 0 130 28"><g fill="none" stroke="#2a2a2a" stroke-width="1" stroke-linejoin="round" stroke-linecap="round"><path d="M20.8 10.7H15.5V19.7H25.6M25.6 8H20.8V13.9H30.9M30.9 6.400H25.6V10.100H30.9M30.9 17.600H25.6V21.300H30.9"/><path d="M57.6 13.900L61.400 8L63 6.400M61.400 9.100L66.700 10.700L69.400 11.200L72.600 9.100M66.700 10.700L68.300 13.900L66.700 17.100L67.200 19.700L63.500 20.800L63 21.300M67.200 19.700L71 17.600L72.600 18.700"/><path d="M99.200 14.900L107 16L110.500 10.100L114.200 6.900M110.500 10.100L109.400 6.600M107 16L107.800 19.700L111 19.700M107.800 19.700L107 21.700" stroke-width="1.150"/></g></svg>
<div class="t " style="left:890.3px;top:125.70px;letter-spacing:0.192px;">Zoom:</div>
<div class="t g" style="left:865.5px;top:157.50px;letter-spacing:-0.086px;">Expansion:</div>
<div class="abs" style="left:936px;top:128px;width:266px;height:2px;background:#bdbdbd"></div>
<div class="abs" style="left:936px;top:160px;width:266px;height:2px;background:#bdbdbd"></div>
<svg class="ic" style="left:934.500px;top:123px" width="13" height="12" viewBox="0 0 13 12"><path d="M0.500 1.500a1 1 0 0 1 1-1H11.500a1 1 0 0 1 1 1V6L6.500 11.700L0.500 6z" fill="#2482e6"/></svg>
<svg class="ic" style="left:934.500px;top:155px" width="13" height="12" viewBox="0 0 13 12"><path d="M0.500 1.500a1 1 0 0 1 1-1H11.500a1 1 0 0 1 1 1V6L6.500 11.700L0.500 6z" fill="#b5b5b5"/></svg>
<div class="t " style="left:918.1px;top:346.70px;letter-spacing:0.029px;">Display:</div>
<div class="box" style="left:967px;top:342px;width:156px;height:23px"></div>
<div class="t " style="left:971.0px;top:346.70px;letter-spacing:-0.078px;">Consensus support(%)</div>
<svg class="ic" style="left:1106.3px;top:349.5px" width="10" height="7" viewBox="0 0 10 7"><path d="M0.8 1L5 5.4L9.2 1" fill="none" stroke="#5a5a5a" stroke-width="1.2"/></svg>
<div class="cb on" style="left:971px;top:373px"><svg width="12" height="12" viewBox="0 0 12 12" style="position:absolute;left:0;top:0"><path d="M1.300 6L4.200 9.300L9.900 1.700" fill="none" stroke="#fff" stroke-width="1.800"/></svg></div>
<div class="t " style="left:988.8px;top:373.90px;letter-spacing:-0.085px;">Show next to node</div>
<div class="t " style="left:909.0px;top:401.10px;letter-spacing:-0.248px;">Font Size:</div>
<div class="t " style="left:865.5px;top:428.00px;letter-spacing:0.075px;">Significant Digits:</div>
<div class="t " style="left:1042.9px;top:401.10px;letter-spacing:0.481px;">to</div>
<div class="box" style="left:967px;top:396.5px;width:73px;height:22px"></div><div class="abs" style="left:1018.5px;top:397.5px;width:1px;height:20px;background:#cfcfcf"></div><div class="t" style="left:967px;width:46px;text-align:right;top:400.07px">8</div><svg class="ic" style="left:1024px;top:400.5px" width="10" height="14" viewBox="0 0 10 14"><path d="M1 5L5 1L9 5M1 9L5 13L9 9" fill="none" stroke="#555" stroke-width="1.100"/></svg>
<div class="box" style="left:1057px;top:396.5px;width:73px;height:22px"></div><div class="abs" style="left:1108.5px;top:397.5px;width:1px;height:20px;background:#cfcfcf"></div><div class="t" style="left:1057px;width:46px;text-align:right;top:400.07px">11</div><svg class="ic" style="left:1114px;top:400.5px" width="10" height="14" viewBox="0 0 10 14"><path d="M1 5L5 1L9 5M1 9L5 13L9 9" fill="none" stroke="#555" stroke-width="1.100"/></svg>
<div class="box" style="left:967px;top:423.3px;width:73px;height:22px"></div><div class="abs" style="left:1018.5px;top:424.3px;width:1px;height:20px;background:#cfcfcf"></div><div class="t" style="left:967px;width:46px;text-align:right;top:426.87px">4</div><svg class="ic" style="left:1024px;top:427.3px" width="10" height="14" viewBox="0 0 10 14"><path d="M1 5L5 1L9 5M1 9L5 13L9 9" fill="none" stroke="#555" stroke-width="1.100"/></svg>
<div class="abs" id="bottom1"></div><div class="abs" id="bottom2"></div>
</div>
</body></html>
